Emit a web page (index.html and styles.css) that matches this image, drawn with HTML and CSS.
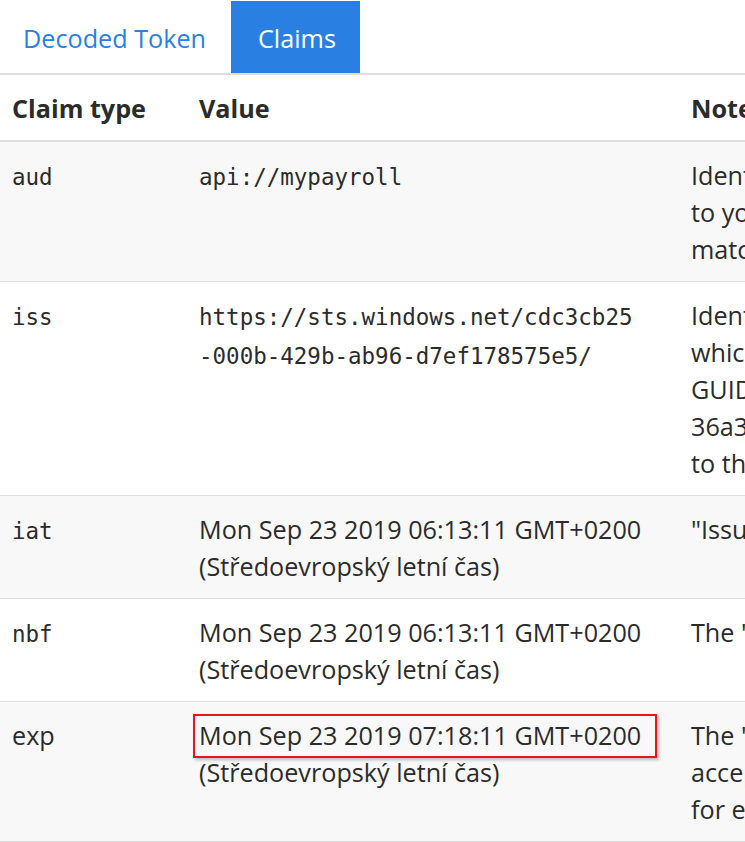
FILE: index.html
```html
<!DOCTYPE html>
<html lang="en">
<head>
<meta charset="utf-8">
<title>Claims</title>
<link rel="stylesheet" href="styles.css">
</head>
<body>
<div class="page">
  <nav class="tabs">
    <a class="tab" href="#">Decoded Token</a>
    <a class="tab active" href="#">Claims</a>
  </nav>
  <table class="claims">
    <colgroup>
      <col class="c-type">
      <col class="c-value">
      <col class="c-notes">
    </colgroup>
    <thead>
      <tr><th>Claim type</th><th>Value</th><th>Notes</th></tr>
    </thead>
    <tbody>
      <tr class="odd">
        <td><code>aud</code></td>
        <td><code>api://mypayroll</code></td>
        <td class="note">Identifies the intended recipient of the token. In access tokens, the audience is your app's Application ID, assigned<br>to your app in the Azure portal. Your app should validate this value, and reject the token if the value does not<br>match.</td>
      </tr>
      <tr>
        <td><code>iss</code></td>
        <td><code>https://sts.windows.net/cdc3cb25<br>-000b-429b-ab96-d7ef178575e5/</code></td>
        <td class="note">Identifies the security token service (STS) that constructs and returns the token, and the Azure AD tenant in<br>which the user was authenticated. If the token was issued by the v2.0 endpoint, the URI will end in /v2.0. The<br>GUID that indicates that the user is a consumer user from a Microsoft account is 9188040d-6c67-4c5b-b112-<br>36a304b66dad. Your app should use the GUID portion of the claim to restrict the set of tenants that can sign in<br>to the app, if applicable.</td>
      </tr>
      <tr class="odd">
        <td><code>iat</code></td>
        <td>Mon Sep 23 2019 06:13:11 GMT+0200<br>(Středoevropský letní čas)</td>
        <td class="note">"Issued At" indicates when the authentication for this token occurred.</td>
      </tr>
      <tr>
        <td><code>nbf</code></td>
        <td>Mon Sep 23 2019 06:13:11 GMT+0200<br>(Středoevropský letní čas)</td>
        <td class="note">The "nbf" (not before) claim identifies the time before which the JWT must not be accepted for processing.</td>
      </tr>
      <tr class="odd">
        <td>exp</td>
        <td><span class="marked">Mon Sep 23 2019 07:18:11 GMT+0200</span><br>(Středoevropský letní čas)</td>
        <td class="note">The "exp" (expiration time) claim identifies the expiration time on or after which the JWT must not be<br>accepted for processing. It's important to note that a resource may reject the token before this time as well, if<br>for example a change in authentication is required or a token revocation has been detected.</td>
      </tr>
    </tbody>
  </table>
</div>
</body>
</html>
```

FILE: styles.css
```css
html, body {
  margin: 0;
  padding: 0;
  background: #ffffff;
}

body {
  font-family: "Open Sans", "Noto Sans", sans-serif;
  font-size: 25.2px;
  line-height: 37px;
  color: #2b2b2b;
  overflow: hidden;
}

.page {
  width: 745px;
  height: 842px;
  overflow: hidden;
}

.tabs {
  display: flex;
  padding-top: 1px;
  border-bottom: 2px solid #dedede;
}

.tab {
  display: block;
  flex: none;
  height: 72px;
  line-height: 74px;
  padding: 0 27px;
  text-decoration: none;
  color: #2a7fe2;
  white-space: nowrap;
}

.tab:first-child {
  padding-left: 23px;
  padding-right: 0;
  width: 208px;
}

.tab.active {
  background: #2a80e2;
  color: #ffffff;
  width: 75px;
}

.claims {
  border-collapse: collapse;
  table-layout: fixed;
  width: 1600px;
}

.c-type { width: 187px; }
.c-value { width: 492px; }
.c-notes { width: 921px; }

.claims th,
.claims td {
  padding: 15px 12px 13px;
  text-align: left;
  vertical-align: top;
}

.claims th {
  font-weight: 700;
  border-bottom: 2px solid #dedede;
}

.claims td {
  border-bottom: 1px solid #dedede;
}

.claims tr.odd td {
  background: #f8f8f8;
}

.note {
  white-space: nowrap;
}

code {
  font-family: "DejaVu Sans Mono", "Liberation Mono", monospace;
  font-size: 22.5px;
}

.marked {
  position: relative;
}

.marked::after {
  content: "";
  position: absolute;
  left: -6px;
  right: -16px;
  top: -4px;
  bottom: -6px;
  border: 2px solid #e8151b;
  box-shadow: 2px 2px 3px rgba(0, 0, 0, 0.25);
}
```
